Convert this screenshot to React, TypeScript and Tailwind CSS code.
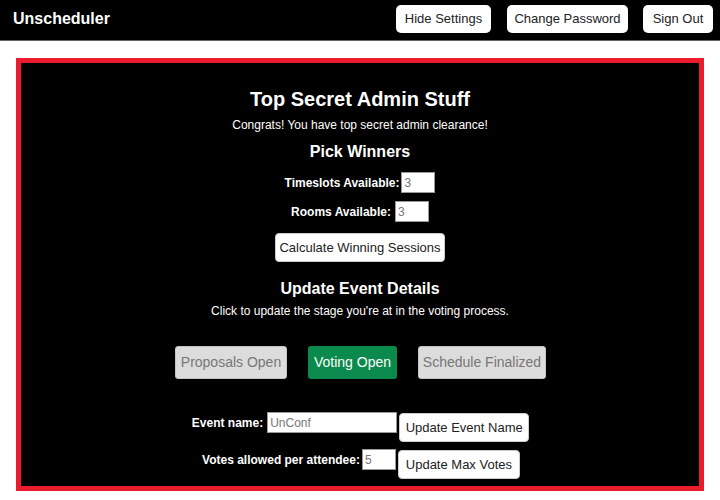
import React from 'react';

const font = "font-['Liberation_Sans',Arial,sans-serif]";

function NavButton({ label, width }: { label: string; width: string }) {
  return (
    <button className={`${width} h-[28px] bg-white rounded-[5px] text-[13px] text-[#222] flex items-center justify-center`}>
      {label}
    </button>
  );
}

function WhiteButton({ label, className = '' }: { label: string; className?: string }) {
  return (
    <button
      className={`h-[29px] bg-white rounded-[4px] border border-[#ccc] text-[13px] text-[#222] flex items-center justify-center ${className}`}
    >
      {label}
    </button>
  );
}

function SmallInput({ value, width }: { value: string; width: string }) {
  return (
    <input
      readOnly
      value={value}
      className={`${width} h-[21px] bg-white border border-[#999] px-[2px] text-[12px] text-[#777] outline-none`}
    />
  );
}

export default function App() {
  return (
    <div className={`min-h-[500px] bg-white ${font}`}>
      {/* top bar */}
      <nav className="h-[41px] bg-black border-b border-[#666] flex items-center justify-between pl-[13px] pr-[7px]">
        <span className="text-white font-bold text-[16px] -mt-[3px]">Unscheduler</span>
        <div className="flex items-center -mt-[2px]">
          <NavButton label="Hide Settings" width="w-[95px]" />
          <div className="w-[16px]" />
          <NavButton label="Change Password" width="w-[121px]" />
          <div className="w-[15px]" />
          <NavButton label="Sign Out" width="w-[70px]" />
        </div>
      </nav>

      <div className="px-[16px] pt-[17px]">
        <div className="h-[433px] border-[5px] border-[#ea1b2d] bg-black text-white flex flex-col items-center">
          <h1 className="mt-[24px] text-[20px] leading-[24px] font-bold">Top Secret Admin Stuff</h1>
          <p className="mt-[7px] text-[12px] leading-[14px]">Congrats! You have top secret admin clearance!</p>

          <h2 className="mt-[10px] text-[16px] leading-[19px] font-bold">Pick Winners</h2>
          <div className="mt-[11px] flex items-center gap-[2px]">
            <span className="text-[12px] font-bold">Timeslots Available:</span>
            <SmallInput value="3" width="w-[34px]" />
          </div>
          <div className="mt-[8px] flex items-center gap-[4px]">
            <span className="text-[12px] font-bold">Rooms Available:</span>
            <SmallInput value="3" width="w-[34px]" />
          </div>
          <WhiteButton label="Calculate Winning Sessions" className="mt-[11px] w-[170px]" />

          <h2 className="mt-[17px] text-[16px] leading-[19px] font-bold">Update Event Details</h2>
          <p className="mt-[6px] text-[12px] leading-[14px]">
            Click to update the stage you're at in the voting process.
          </p>

          <div className="mt-[28px] flex gap-[21px] pl-[1px]">
            <button className="w-[112px] h-[33px] rounded-[3px] bg-[#dcdcdc] border border-[#c4c4c4] text-[14px] text-[#777]">
              Proposals Open
            </button>
            <button className="w-[89px] h-[33px] rounded-[3px] bg-[#0a8a4c] text-[14px] text-white">
              Voting Open
            </button>
            <button className="w-[128px] h-[33px] rounded-[3px] bg-[#dcdcdc] border border-[#c4c4c4] text-[14px] text-[#777]">
              Schedule Finalized
            </button>
          </div>

          <div className="mt-[33px] flex items-start pl-[1px]">
            <span className="h-[21px] flex items-center text-[12px] font-bold mr-[4px]">Event name:</span>
            <SmallInput value="UnConf" width="w-[130px]" />
            <WhiteButton label="Update Event Name" className="ml-[2px] mt-[1px] w-[130px]" />
          </div>
          <div className="mt-[7px] flex items-start pl-[2px]">
            <span className="h-[21px] flex items-center text-[12px] font-bold mr-[2px]">Votes allowed per attendee:</span>
            <SmallInput value="5" width="w-[34px]" />
            <WhiteButton label="Update Max Votes" className="ml-[2px] mt-[1px] w-[122px]" />
          </div>
        </div>
      </div>
    </div>
  );
}
